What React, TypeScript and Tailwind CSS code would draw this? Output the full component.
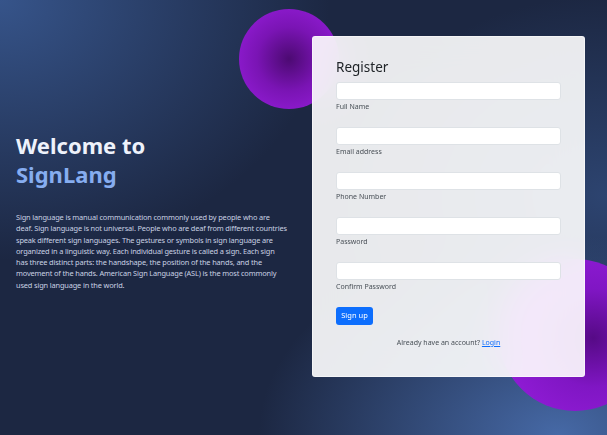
export default function App() {
  const fields = ["Full Name", "Email address", "Phone Number", "Password", "Confirm Password"];

  return (
    <div
      className="relative h-[435px] w-full overflow-hidden bg-[#1c2742] bg-[radial-gradient(ellipse_330px_260px_at_0%_0%,#36548a_0%,rgba(54,84,138,0)_100%),radial-gradient(ellipse_300px_200px_at_92%_100%,#4669a6_0%,rgba(70,105,166,0)_100%),radial-gradient(ellipse_260px_200px_at_100%_45%,#2d4470_0%,rgba(45,68,112,0)_100%)]"
      style={{ fontFamily: '"Noto Sans", "Open Sans", sans-serif' }}
    >
      {/* decorative blobs */}
      <div className="absolute left-[239px] top-[9px] h-[100px] w-[100px] rounded-full bg-[radial-gradient(circle,#4c0a72_0%,#7a14b4_45%,#9a1fe0_100%)]" />
      <div className="absolute left-[499px] top-[259px] h-[152px] w-[152px] rounded-full bg-[radial-gradient(circle_at_62%_52%,#560a86_0%,#8016c4_40%,#9a1fe0_100%)]" />

      <div className="relative flex h-full items-center">
        <div className="mb-[13px] w-[312px] pl-4">
          <h1 className="text-[22px] font-bold leading-[29px] text-[#eef2fb]">
            Welcome to
            <br />
            <span className="text-[#86adf0]">SignLang</span>
          </h1>
          <p className="mt-[23px] whitespace-nowrap text-[7.4px] leading-[11.33px] tracking-[-0.15px] text-[#c9d1e3]">
            Sign language is manual communication commonly used by people who are
            <br />
            deaf. Sign language is not universal. People who are deaf from different countries
            <br />
            speak different sign languages. The gestures or symbols in sign language are
            <br />
            organized in a linguistic way. Each individual gesture is called a sign. Each sign
            <br />
            has three distinct parts: the handshape, the position of the hands, and the
            <br />
            movement of the hands. American Sign Language (ASL) is the most commonly
            <br />
            used sign language in the world.
          </p>
        </div>

        <div className="mb-[22px] h-[341px] w-[273px] rounded-[3px] border border-white/50 bg-white/90 px-[23px] pt-[20px] backdrop-blur-lg">
          <h2 className="mb-[5px] text-[13.5px] leading-[20px] text-[#212529]">Register</h2>
          {fields.map((f) => (
            <div key={f} className="mb-[15px] last:mb-[13px]">
              <input
                type={f.includes("Password") ? "password" : "text"}
                className="block h-[18px] w-full rounded-[3px] border border-[#dee2e6] bg-white outline-none"
              />
              <div className="mt-[2px] text-[7px] leading-[10px] text-[#495057]">{f}</div>
            </div>
          ))}
          <button className="block h-[18px] w-[37px] rounded-[3px] bg-[#0d6efd] text-[7.5px] text-white">
            Sign up
          </button>
          <p className="mt-[13px] text-center text-[7px] leading-[10px] text-[#495057]">
            Already have an account? <a className="text-[#0d6efd] underline">Login</a>
          </p>
        </div>
      </div>
    </div>
  );
}
